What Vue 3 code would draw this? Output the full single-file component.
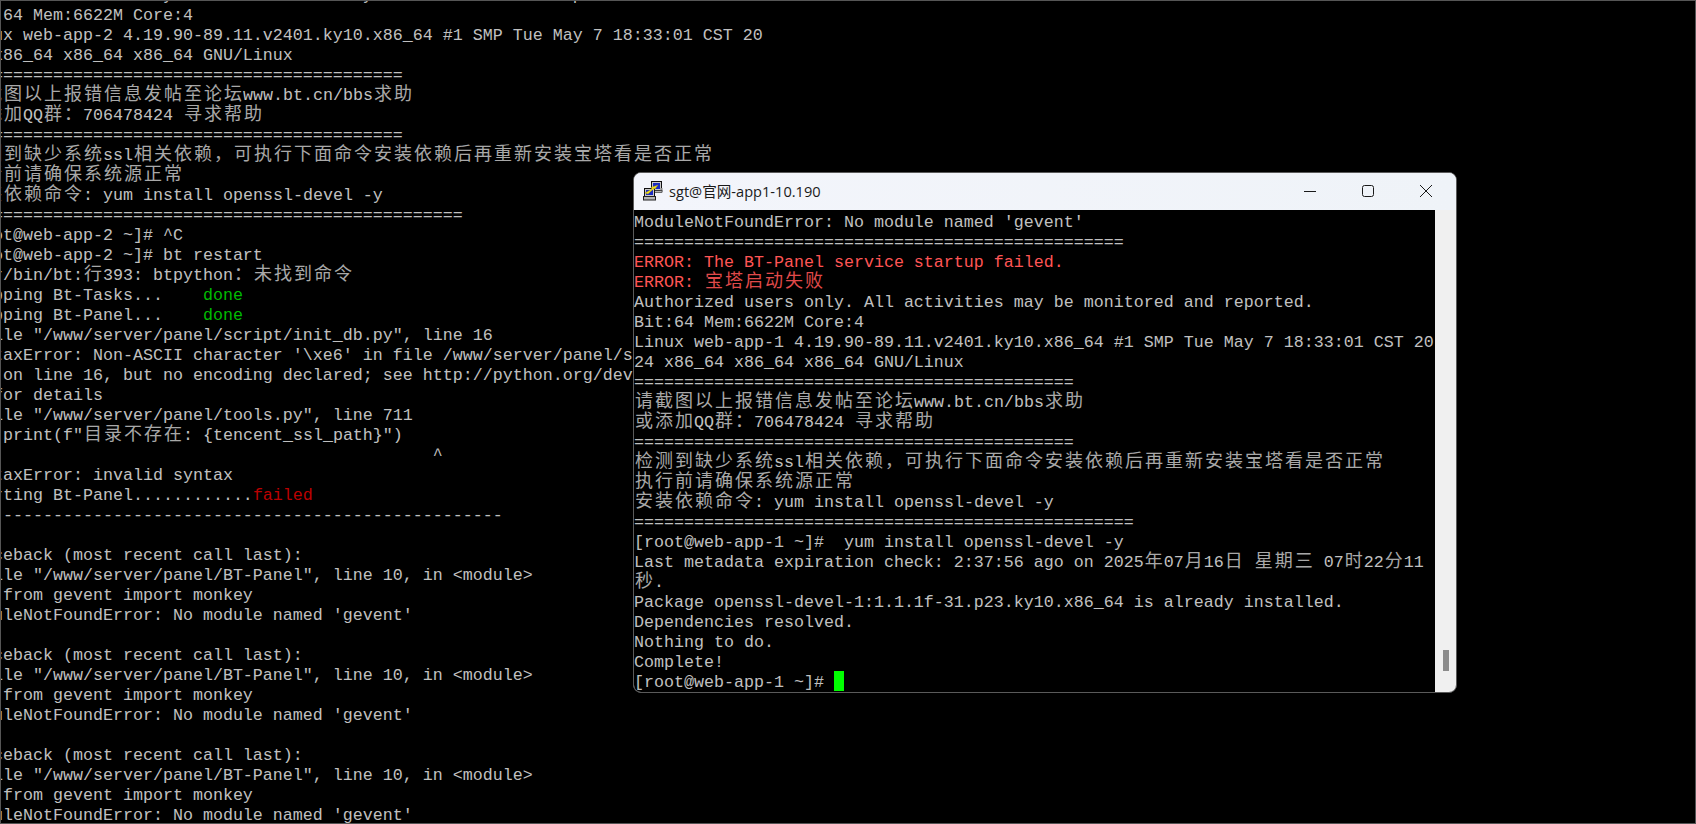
<script setup>
const CJK = /([\u3000-\u30ff\u3400-\u9fff\uff00-\uffef]+)/

function toSegments(text, tone = '') {
  return text
    .split(CJK)
    .filter(Boolean)
    .map((part) => ({ text: part, cjk: CJK.test(part), tone }))
}

// A row is a string, or a list of [text, tone] pairs.
function toRow(row) {
  if (typeof row === 'string') return toSegments(row)
  return row.flatMap(([text, tone]) => toSegments(text, tone))
}

const rule44 = '='.repeat(44)
const rule50 = '='.repeat(50)

const traceback = [
  '',
  'Traceback (most recent call last):',
  '  File "/www/server/panel/BT-Panel", line 10, in <module>',
  '    from gevent import monkey',
  "ModuleNotFoundError: No module named 'gevent'",
]

const backLines = [
  'Authorized users only. All activities may be monitored and reported.',
  'Bit:64 Mem:6622M Core:4',
  'Linux web-app-2 4.19.90-89.11.v2401.ky10.x86_64 #1 SMP Tue May 7 18:33:01 CST 20',
  '24 x86_64 x86_64 x86_64 GNU/Linux',
  rule44,
  '请截图以上报错信息发帖至论坛www.bt.cn/bbs求助',
  '或添加QQ群：706478424 寻求帮助',
  rule44,
  '检测到缺少系统ssl相关依赖，可执行下面命令安装依赖后再重新安装宝塔看是否正常',
  '执行前请确保系统源正常',
  '安装依赖命令: yum install openssl-devel -y',
  rule50,
  '[root@web-app-2 ~]# ^C',
  '[root@web-app-2 ~]# bt restart',
  '/usr/bin/bt:行393: btpython：未找到命令',
  [['Stopping Bt-Tasks...    ', ''], ['done', 'green']],
  [['Stopping Bt-Panel...    ', ''], ['done', 'green']],
  '  File "/www/server/panel/script/init_db.py", line 16',
  "SyntaxError: Non-ASCII character '\\xe6' in file /www/server/panel/script/init_db.py",
  '.py on line 16, but no encoding declared; see http://python.org/dev/peps/pep-0263/',
  '3/ for details',
  '  File "/www/server/panel/tools.py", line 711',
  '    print(f"目录不存在: {tencent_ssl_path}")',
  ' '.repeat(47) + '^',
  'SyntaxError: invalid syntax',
  [['Starting Bt-Panel............', ''], ['failed', 'red']],
  '-'.repeat(54),
  ...traceback,
  ...traceback,
  ...traceback,
].map(toRow)

const frontLines = [
  "ModuleNotFoundError: No module named 'gevent'",
  '='.repeat(49),
  [['ERROR: The BT-Panel service startup failed.', 'bright-red']],
  [['ERROR: 宝塔启动失败', 'bright-red']],
  'Authorized users only. All activities may be monitored and reported.',
  'Bit:64 Mem:6622M Core:4',
  'Linux web-app-1 4.19.90-89.11.v2401.ky10.x86_64 #1 SMP Tue May 7 18:33:01 CST 20',
  '24 x86_64 x86_64 x86_64 GNU/Linux',
  rule44,
  '请截图以上报错信息发帖至论坛www.bt.cn/bbs求助',
  '或添加QQ群：706478424 寻求帮助',
  rule44,
  '检测到缺少系统ssl相关依赖，可执行下面命令安装依赖后再重新安装宝塔看是否正常',
  '执行前请确保系统源正常',
  '安装依赖命令: yum install openssl-devel -y',
  rule50,
  '[root@web-app-1 ~]#  yum install openssl-devel -y',
  'Last metadata expiration check: 2:37:56 ago on 2025年07月16日 星期三 07时22分11',
  '秒.',
  'Package openssl-devel-1:1.1.1f-31.p23.ky10.x86_64 is already installed.',
  'Dependencies resolved.',
  'Nothing to do.',
  'Complete!',
].map(toRow)

const promptRow = toRow('[root@web-app-1 ~]# ')
</script>

<template>
  <div class="desktop">
    <div class="back-terminal">
      <div class="back-lines">
        <div v-for="(row, r) in backLines" :key="r" class="line">
          <span
            v-for="(seg, s) in row"
            :key="s"
            :class="[seg.tone, { cjk: seg.cjk }]"
          >{{ seg.text }}</span>
        </div>
      </div>
    </div>

    <section class="window">
      <header class="titlebar">
        <svg class="app-icon" viewBox="0 0 20 20" width="20" height="20" aria-hidden="true">
          <rect x="8.5" y="0.5" width="10" height="9" fill="#c9c9c9" stroke="#111" />
          <rect x="10" y="2" width="7" height="6" fill="#1b2bc4" />
          <rect x="17.5" y="7" width="2" height="4" fill="#8a8a8a" />
          <rect x="10" y="9.5" width="9" height="2" fill="#b5b5b5" stroke="#222" stroke-width="0.6" />
          <rect x="1.5" y="7.5" width="10" height="8" fill="#c9c9c9" stroke="#111" />
          <rect x="3" y="9" width="7" height="5" fill="#1b2bc4" />
          <rect x="0.5" y="15.5" width="12" height="3.5" fill="#b5b5b5" stroke="#222" />
          <path d="M2 12 L9 8 L8 6.5 L15 4 L12 8 L11 7.5 L5 13 Z" fill="#f4e21a" stroke="#a89a10" stroke-width="0.4" />
        </svg>
        <span class="title">sgt@官网-app1-10.190</span>
        <div class="controls">
          <span class="control">
            <svg viewBox="0 0 14 14" width="14" height="14" aria-hidden="true"><path d="M1 7.5H13" stroke="#1a1a1a" fill="none" /></svg>
          </span>
          <span class="control">
            <svg viewBox="0 0 14 14" width="14" height="14" aria-hidden="true"><rect x="1.5" y="1.5" width="11" height="11" rx="2" stroke="#1a1a1a" fill="none" /></svg>
          </span>
          <span class="control">
            <svg viewBox="0 0 14 14" width="14" height="14" aria-hidden="true"><path d="M1 1L13 13M13 1L1 13" stroke="#1a1a1a" fill="none" /></svg>
          </span>
        </div>
      </header>

      <div class="client">
        <div class="front-lines">
          <div v-for="(row, r) in frontLines" :key="r" class="line">
            <span
              v-for="(seg, s) in row"
              :key="s"
              :class="[seg.tone, { cjk: seg.cjk }]"
            >{{ seg.text }}</span>
          </div>
          <div class="line">
            <span v-for="(seg, s) in promptRow" :key="s">{{ seg.text }}</span><span class="cursor"></span>
          </div>
        </div>
        <div class="scrollbar">
          <div class="thumb"></div>
        </div>
      </div>
    </section>
  </div>
</template>

<style scoped>
.desktop {
  position: relative;
  width: 1696px;
  height: 824px;
  overflow: hidden;
  background: #000;
  font-family: "Liberation Mono", "Noto Sans CJK SC", monospace;
  font-size: 16.67px;
  color: #c0c0c0;
}

.back-terminal {
  box-sizing: border-box;
  width: 100%;
  height: 100%;
  overflow: hidden;
  border: 1px solid #555;
  background: #000;
}

.back-lines {
  margin: -17px 0 0 -38px;
  width: 1800px;
}

.line {
  height: 20px;
  line-height: 23px;
  white-space: pre;
}

.cjk {
  font-family: "Noto Sans CJK SC", sans-serif;
  font-size: 18px;
  letter-spacing: 2px;
  line-height: 0;
  margin-left: 1px;
  margin-right: -1px;
  opacity: 0.88;
}

.green { color: #00bb00; }
.red { color: #bb0000; }
.bright-red { color: #ff5555; }

.window {
  position: absolute;
  left: 633px;
  top: 172px;
  width: 822px;
  border: 1px solid #5a5a5a;
  border-radius: 8px;
  overflow: hidden;
  background: #f0f4f9;
}

.titlebar {
  display: flex;
  align-items: center;
  height: 35px;
  padding-bottom: 2px;
  padding-left: 9px;
  background: linear-gradient(90deg, #f3f5fb, #eff3f8);
  font-family: "Open Sans", "Noto Sans CJK SC", sans-serif;
  color: #1a1a1a;
}

.app-icon {
  flex: none;
  margin-top: 1px;
}

.title {
  margin-left: 6px;
  font-size: 14.6px;
}

.controls {
  display: flex;
  margin-left: auto;
  margin-right: 1px;
}

.control {
  display: flex;
  align-items: center;
  justify-content: center;
  width: 58px;
  height: 35px;
}

.client {
  display: flex;
  height: 482px;
  background: #000;
}

.front-lines {
  flex: 1;
  min-width: 0;
  padding-top: 1px;
  overflow: hidden;
}

.cursor {
  display: inline-block;
  width: 10px;
  height: 20px;
  vertical-align: top;
  background: #00ff00;
}

.scrollbar {
  flex: none;
  position: relative;
  width: 21px;
  background: #f0f0f0;
}

.thumb {
  position: absolute;
  left: 8px;
  top: 440px;
  width: 6px;
  height: 21px;
  background: #8b8b8b;
}
</style>

<style>
html, body { margin: 0; background: #000; }
</style>
